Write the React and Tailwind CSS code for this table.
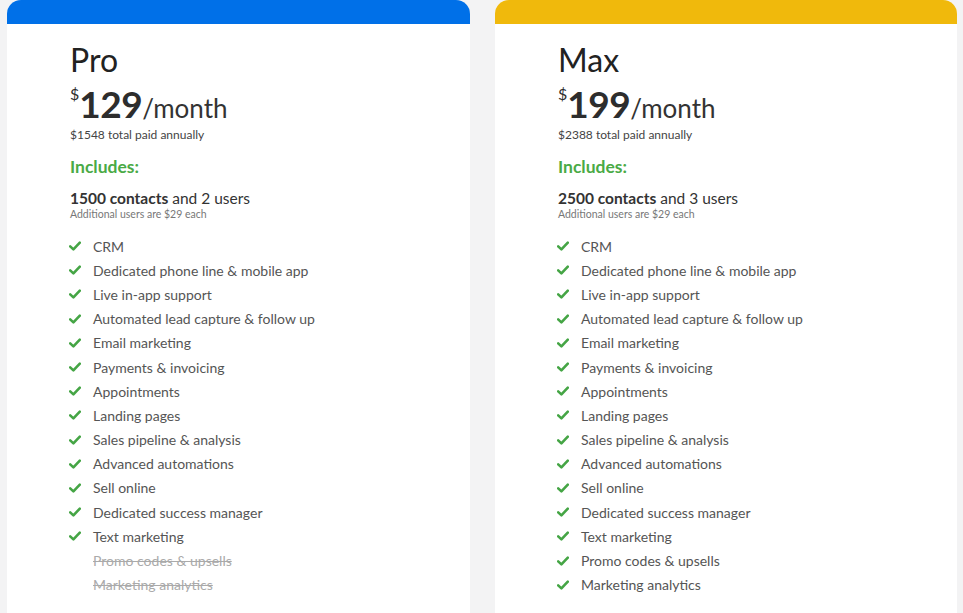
import React from "react";

const features = [
  "CRM",
  "Dedicated phone line & mobile app",
  "Live in-app support",
  "Automated lead capture & follow up",
  "Email marketing",
  "Payments & invoicing",
  "Appointments",
  "Landing pages",
  "Sales pipeline & analysis",
  "Advanced automations",
  "Sell online",
  "Dedicated success manager",
  "Text marketing",
  "Promo codes & upsells",
  "Marketing analytics",
];

const plans = [
  { name: "Pro", price: "129", total: "$1548", contacts: "1500", users: "2", bar: "bg-[#0070e8]", included: 13, width: "w-[463px]" },
  { name: "Max", price: "199", total: "$2388", contacts: "2500", users: "3", bar: "bg-[#f0b90c]", included: 15, width: "w-[462px]" },
];

const Check = () => (
  <svg width="12" height="10" viewBox="0 0 12 10" className="shrink-0">
    <path d="M1.2 5.4 L4.4 8.4 L10.8 1.6" fill="none" stroke="#45a545" strokeWidth="2.6" strokeLinecap="round" strokeLinejoin="round" />
  </svg>
);

const PlanCard = ({ plan }) => (
  <div className={`${plan.width} h-[640px] shrink-0 bg-white rounded-t-[14px] overflow-hidden flex flex-col`}>
    <div className={`h-6 ${plan.bar}`} />
    <div className="pl-[63px] pt-[17px] flex flex-col">
      <h2 className="text-[32px] leading-[38px] text-[#222] font-normal">{plan.name}</h2>
      <div className="flex items-start mt-[8px] h-[34px] text-[#2d2d2d]">
        <span className="text-[16px] leading-none mt-[-1px]">$</span>
        <span className="text-[37px] leading-[34px] font-bold tracking-[-0.5px]">{plan.price}</span>
        <span className="text-[26px] leading-[34px] mt-[4px] text-[#333]">/month</span>
      </div>
      <p className="text-[12px] leading-[14px] mt-[7px] text-[#444]">{plan.total} total paid annually</p>
      <p className="text-[17.5px] leading-[20px] mt-[15px] font-bold text-[#4aaa46]">Includes:</p>
      <p className="text-[15.5px] leading-[18px] mt-[12px] text-[#333]">
        <span className="font-bold">{plan.contacts} contacts</span> and {plan.users} users
      </p>
      <p className="text-[10.5px] leading-[13px] mt-[1px] text-[#777]">Additional users are $29 each</p>
      <ul className="mt-[13px] flex flex-col">
        {features.map((f, i) => {
          const on = i < plan.included;
          return (
            <li key={f} className="h-[24.2px] flex items-center gap-[12px] -ml-[1px]">
              <span className="w-3 flex justify-center">{on && <Check />}</span>
              <span className={`text-[14px] ${on ? "text-[#555]" : "text-[#aaa] line-through"}`}>{f}</span>
            </li>
          );
        })}
      </ul>
    </div>
  </div>
);

export default function App() {
  return (
    <div className="w-[963px] h-[613px] overflow-hidden bg-[#f3f3f4] flex gap-[25px] pl-[7px] font-['Lato',sans-serif]">
      {plans.map((p) => (
        <PlanCard key={p.name} plan={p} />
      ))}
    </div>
  );
}
